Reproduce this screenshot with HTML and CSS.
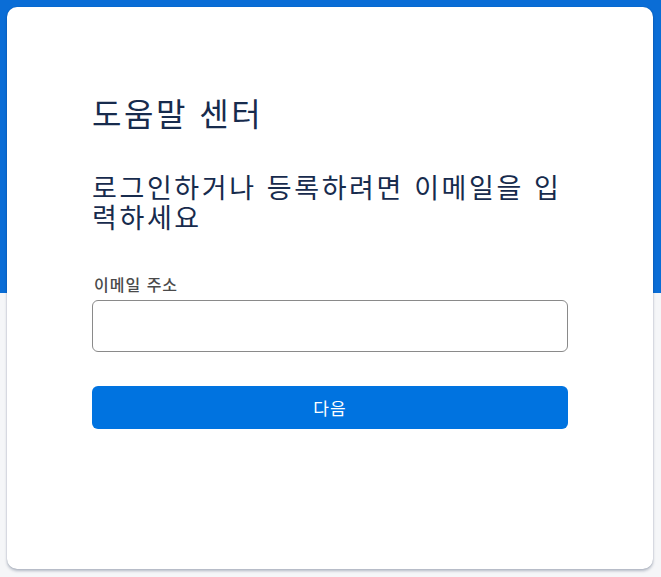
FILE: index.html
```html
<!DOCTYPE html>
<html lang="ko">
<head>
<meta charset="utf-8">
<title>도움말 센터</title>
<link rel="stylesheet" href="styles.css">
</head>
<body>
<div class="page">
  <main class="card">
    <h1 class="title">도움말 센터</h1>
    <h2 class="subtitle">로그인하거나 등록하려면 이메일을 입력하세요</h2>
    <form class="form">
      <label class="label" for="email">이메일 주소</label>
      <input class="input" id="email" type="email">
      <button class="btn" type="button">다음</button>
    </form>
  </main>
</div>
</body>
</html>
```

FILE: styles.css
```css
html, body {
  margin: 0;
  padding: 0;
}
body {
  font-family: "Noto Sans CJK KR", "Noto Sans", sans-serif;
  background: linear-gradient(to bottom, #0a6dd6 0, #0a6dd6 293px, #f5f6f8 293px, #f5f6f8 100%);
  min-height: 577px;
}
.page {
  padding: 7px 8px 7px 7px;
}
.card {
  box-sizing: border-box;
  height: 562px;
  background: #ffffff;
  border-radius: 10px;
  box-shadow: 0 2px 3px rgba(9, 30, 66, 0.28), 0 0 1px rgba(9, 30, 66, 0.3);
  padding: 85px 85px 0 85px;
}
.title {
  margin: 0;
  font-size: 32px;
  line-height: 40px;
  font-weight: 400;
  letter-spacing: 2.5px;
  color: #172b4d;
}
.subtitle {
  margin: 40px 0 0 0;
  font-size: 27px;
  line-height: 30px;
  font-weight: 400;
  letter-spacing: 2.6px;
  color: #172b4d;
}
.form {
  display: flex;
  flex-direction: column;
  margin-top: 42px;
}
.label {
  font-size: 16px;
  line-height: 20px;
  font-weight: 500;
  letter-spacing: 1px;
  color: #4a4a4a;
  padding-left: 2px;
}
.input {
  box-sizing: border-box;
  margin: 6px 0 0 0;
  height: 52px;
  border: 1px solid #8a8a8a;
  border-radius: 6px;
  background: #ffffff;
  font: inherit;
  padding: 0 12px;
}
.btn {
  margin-top: 34px;
  height: 43px;
  border: none;
  border-radius: 6px;
  background: #0073e0;
  color: #ffffff;
  font-family: inherit;
  font-size: 17px;
  font-weight: 400;
  letter-spacing: 1px;
}
```
